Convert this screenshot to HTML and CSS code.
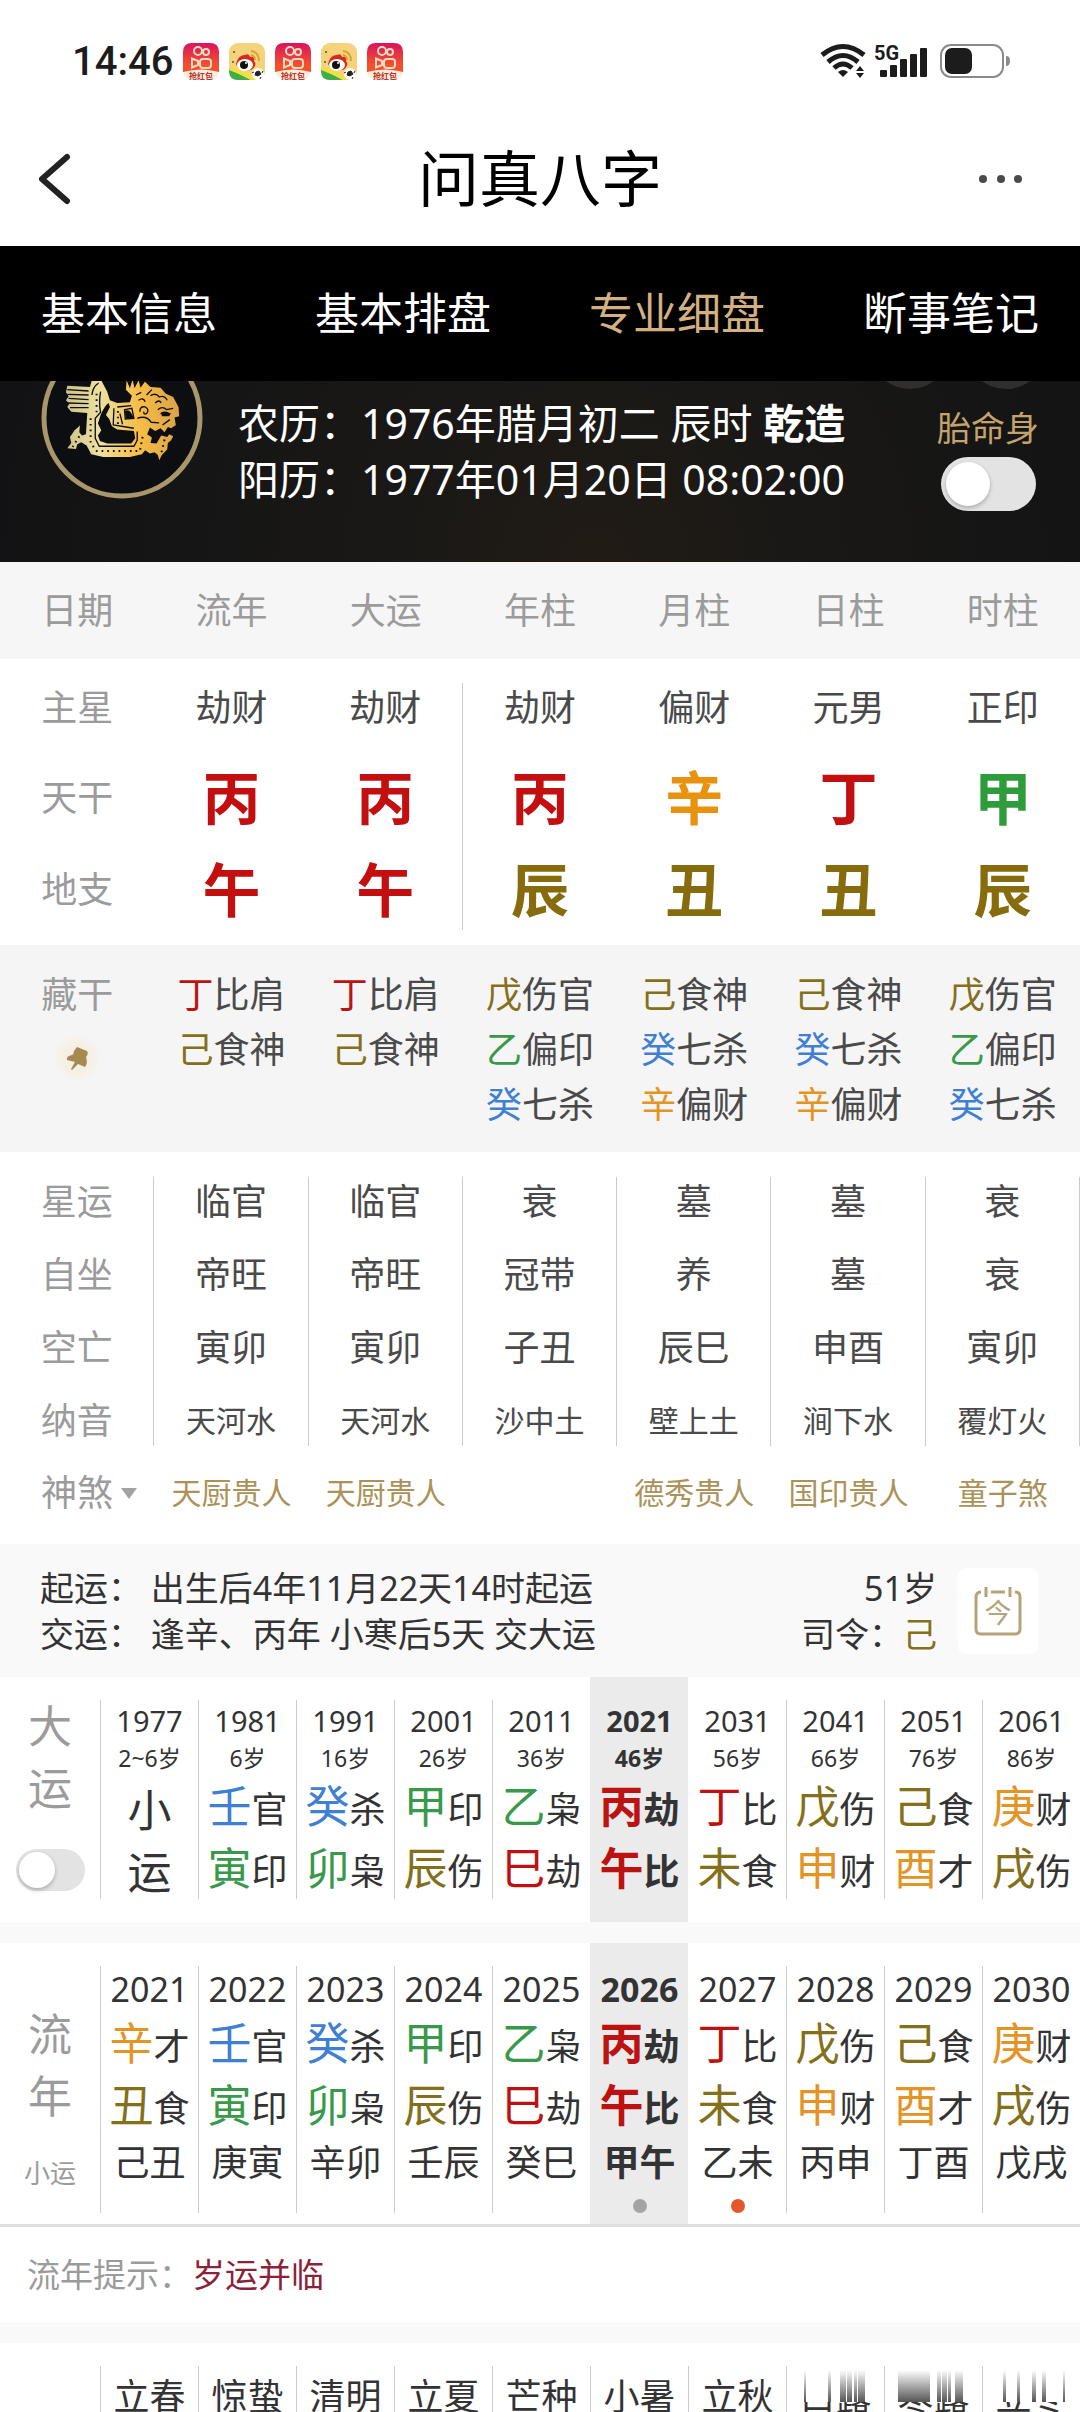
FILE: index.html
```html
<!DOCTYPE html>
<html lang="zh-CN">
  <head>
    <meta charset="UTF-8" />
    <meta name="viewport" content="width=device-width, initial-scale=1.0" />
    <title>问真八字</title>
    <link rel="stylesheet" href="styles.css">
  </head>
  <body>
    <svg class="defs" width="0" height="0" aria-hidden="true">
      <defs>
        <linearGradient id="redbag" x1="0" y1="0" x2="0" y2="1">
          <stop offset="0" stop-color="#d81360" />
          <stop offset="0.75" stop-color="#f4502c" />
        </linearGradient>
        <linearGradient id="gold" x1="0" y1="0" x2="1" y2="0">
          <stop offset="0" stop-color="#cfc389" />
          <stop offset="0.3" stop-color="#eee0a0" />
          <stop offset="0.65" stop-color="#f7bd45" />
          <stop offset="1" stop-color="#d9a24a" />
        </linearGradient>
        <linearGradient id="fade" x1="0" y1="0" x2="0" y2="1">
          <stop offset="0" stop-color="#fff" />
          <stop offset="1" stop-color="#555" />
        </linearGradient>
        <symbol id="app-video" viewBox="0 0 36 37">
          <path d="M0 29V9Q0 0 9 0H27Q36 0 36 9V29Z" fill="url(#redbag)" />
          <path d="M0 29Q18 24 36 29Q34 37 26 37H10Q2 37 0 29Z" fill="#fdeede" />
          <g fill="none" stroke="#fbdcc0" stroke-width="2">
            <circle cx="15" cy="8" r="4" />
            <circle cx="23" cy="9" r="3" />
            <rect x="17" y="16" width="11" height="9" rx="3" />
            <path d="M15 18L9 15.500V24.500L15 22Z" />
          </g>
          <text x="18" y="36" font-size="8" font-weight="700" text-anchor="middle" fill="#b8322a">抢红包</text>
        </symbol>
        <symbol id="app-weibo" viewBox="0 0 36 37">
          <rect width="36" height="37" rx="9" fill="#f4d37c" />
          <path d="M0 26Q12 32 22 37H9Q0 37 0 28Z" fill="#3fae49" />
          <path d="M2 24Q16 27 27 37H22Q12 31 0 27Z" fill="#f2e13c" />
          <path d="M7 21Q9 12 16 12Q20 10 21 14Q27 13 25 18Q29 22 22 27Q10 29 7 21Z" fill="#d9281c" />
          <ellipse cx="16" cy="22" rx="8" ry="6" fill="#fff" />
          <circle cx="15" cy="22" r="4" fill="#111" />
          <circle cx="17" cy="20" r="1" fill="#fff" />
          <path d="M22 8Q30 9 30 18M22 12Q26 13 26 17" fill="none" stroke="#d9a33a" stroke-width="2" />
          <circle cx="5" cy="9" r="1" fill="#6b4a1c" />
          <circle cx="4" cy="19" r="1" fill="#6b4a1c" />
          <circle cx="29" cy="31" r="6" fill="#fff" />
          <path d="M27 29L30 28L32 31L29 33L26 32ZM23 30L25 29M31 36L32 34M34 28L33 30" fill="#222" stroke="#222" />
        </symbol>
      </defs>
    </svg>

    <div class="app">
      <div class="status">
        <span class="clock">14:46</span>
        <div class="notices">
          <svg width="36" height="37"><use href="#app-video" /></svg>
          <svg width="36" height="37"><use href="#app-weibo" /></svg>
          <svg width="36" height="37"><use href="#app-video" /></svg>
          <svg width="36" height="37"><use href="#app-weibo" /></svg>
          <svg width="36" height="37"><use href="#app-video" /></svg>
        </div>
        <svg class="signals" width="192" height="38" viewBox="0 0 192 38">
          <g fill="none" stroke="#1c1c1c" stroke-width="5">
            <path d="M2 12Q23 -5 44 12" />
            <path d="M8 19Q23 6 38 19" />
            <path d="M14 25Q23 17 32 25" />
          </g>
          <path d="M18 29Q23 25 28 29L23 34Z" fill="#1c1c1c" />
          <path d="M36 28L40 23L44 28ZM36 30L40 35L44 30Z" fill="#1c1c1c" />
          <text x="54" y="17" class="net">5G</text>
          <g fill="#1c1c1c">
            <rect x="60" y="27" width="7" height="7" rx="1" />
            <rect x="70" y="22" width="7" height="12" rx="1" />
            <rect x="80" y="16" width="7" height="18" rx="1" />
            <rect x="90" y="11" width="7" height="23" rx="1" />
            <rect x="100" y="5" width="7" height="29" rx="1" />
          </g>
          <rect x="121" y="2" width="62" height="32" rx="10" fill="none" stroke="#8a8a8a" stroke-width="2" />
          <rect x="125" y="5" width="27" height="26" rx="7" fill="#1c1c1c" />
          <path d="M186 13Q190 13 190 18Q190 23 186 23Z" fill="#8a8a8a" />
        </svg>
      </div>

      <header class="titlebar">
        <button class="icon-btn" aria-label="返回">
          <svg width="36" height="52" viewBox="0 0 36 52">
            <path d="M31 4L6 26L31 48" fill="none" stroke="#222" stroke-width="6" stroke-linecap="round" stroke-linejoin="round" />
          </svg>
        </button>
        <h1>问真八字</h1>
        <button class="icon-btn more" aria-label="更多">
          <svg width="46" height="12" viewBox="0 0 46 12" fill="#4a4a4a">
            <circle cx="6" cy="6" r="4" />
            <circle cx="24" cy="6" r="4" />
            <circle cx="41" cy="6" r="4" />
          </svg>
        </button>
      </header>

      <nav class="tabs">
        <a href="#info">基本信息</a>
        <a href="#chart">基本排盘</a>
        <a href="#detail" class="active">专业细盘</a>
        <a href="#notes">断事笔记</a>
      </nav>

      <section class="profile">
        <svg class="emblem" width="162" height="162" viewBox="0 0 162 162">
          <circle cx="81" cy="81" r="78" fill="#0d0e12" stroke="#a8976a" stroke-width="5" />
          <g transform="translate(-11 38) scale(0.333)">
            <path fill="url(#gold)" d="M112 32L180 36L186 14L215 18L232 50L240 76L262 84L300 82L306 62L288 44L290 16L300 40L308 14L314 40L326 16L332 38L345 20L362 36L392 38L408 56L430 66L446 96L448 124L434 128L438 150L424 160L414 156L404 172L392 160L376 168L360 158L352 178L366 188L362 204L380 206L394 182L412 186L418 178L430 184L424 196L414 204L412 224L396 240L388 256L384 240L374 232L360 236L346 226L336 238L300 246H220L184 238L170 212L154 202L142 208L138 222L112 220L124 204L120 186L134 166L150 152L148 172L156 182L168 178L172 114L124 110L112 96L118 86L108 76L116 64L108 52Z" />
            <path fill="#0d0e12" d="M212 120Q224 92 236 84L240 96L228 120L238 132L246 154L262 164L312 168L316 190L304 206H232L210 198L204 182L214 166L204 146Z" />
            <g fill="none" stroke="#0d0e12" stroke-width="4">
              <path d="M112 44L176 48M112 58L176 60M116 70L176 74M112 84L176 86M120 98L176 98" />
              <path d="M186 60Q188 36 206 24M212 50Q206 84 212 112L196 130L196 190L208 214H312L322 196V170" />
              <path d="M252 100L250 150L312 160M262 96L304 92M270 116L278 148M284 104L306 100L312 130L286 132Z" />
              <path d="M330 110Q330 92 346 96Q360 104 350 116Q340 120 342 110M326 76Q340 66 346 80M362 62Q378 52 388 66Q404 60 412 76M376 84Q388 72 394 84M384 104Q398 92 410 104L430 100M392 116H422M322 130Q350 120 364 142L388 144M398 150L420 134M350 60L366 44M318 60L334 52" />
            </g>
            <g fill="none" stroke="#0d0e12" stroke-width="6" stroke-dasharray="5 12">
              <path d="M200 56V120M182 130V204L200 228H330L340 176" />
              <path d="M264 108V150M404 194L394 236M148 184L128 216" />
            </g>
            <path fill="#0d0e12" d="M284 108Q298 100 306 118L312 130H288ZM394 112Q408 106 422 116L418 124H396Z" />
          </g>
        </svg>
        <div class="birth">
          <p>农历：1976年腊月初二 辰时 <b>乾造</b></p>
          <p>阳历：1977年01月20日 08:02:00</p>
        </div>
        <svg class="round-btns" width="180" height="8" viewBox="0 0 180 8" fill="#302f2e">
          <circle cx="42" cy="-32" r="40" />
          <circle cx="138" cy="-32" r="40" />
        </svg>
        <label class="body-switch">
          <span>胎命身</span>
          <input type="checkbox" class="switch switch-lg">
        </label>
      </section>

      <table class="pillars">
        <thead>
          <tr>
            <th>日期</th><th>流年</th><th>大运</th><th>年柱</th><th>月柱</th><th>日柱</th><th>时柱</th>
          </tr>
        </thead>
        <tbody class="stems">
          <tr>
            <th>主星</th><td>劫财</td><td>劫财</td><td>劫财</td><td>偏财</td><td>元男</td><td>正印</td>
          </tr>
          <tr class="big">
            <th>天干</th>
            <td class="fire">丙</td><td class="fire">丙</td><td class="fire">丙</td>
            <td class="metal">辛</td><td class="fire">丁</td><td class="wood">甲</td>
          </tr>
          <tr class="big">
            <th>地支</th>
            <td class="fire">午</td><td class="fire">午</td><td class="earth">辰</td>
            <td class="earth">丑</td><td class="earth">丑</td><td class="earth">辰</td>
          </tr>
        </tbody>
        <tbody class="hidden-stems">
          <tr>
            <th>
              藏干
              <button class="pin" aria-label="固定">
                <svg width="26" height="26" viewBox="0 0 26 26">
                  <path d="M13 2L23 6Q25 8 22 12Q24 18 21 22L14 19L8 25L7 24L11 17L3 15Q2 11 8 10Q10 9 10 6Z" fill="#a78952" />
                </svg>
              </button>
            </th>
            <td><span class="fire">丁</span>比肩<br><span class="earth">己</span>食神</td>
            <td><span class="fire">丁</span>比肩<br><span class="earth">己</span>食神</td>
            <td><span class="earth">戊</span>伤官<br><span class="wood">乙</span>偏印<br><span class="water">癸</span>七杀</td>
            <td><span class="earth">己</span>食神<br><span class="water">癸</span>七杀<br><span class="metal">辛</span>偏财</td>
            <td><span class="earth">己</span>食神<br><span class="water">癸</span>七杀<br><span class="metal">辛</span>偏财</td>
            <td><span class="earth">戊</span>伤官<br><span class="wood">乙</span>偏印<br><span class="water">癸</span>七杀</td>
          </tr>
        </tbody>
        <tbody class="cycles">
          <tr>
            <th>星运</th><td>临官</td><td>临官</td><td>衰</td><td>墓</td><td>墓</td><td>衰</td>
          </tr>
          <tr>
            <th>自坐</th><td>帝旺</td><td>帝旺</td><td>冠带</td><td>养</td><td>墓</td><td>衰</td>
          </tr>
          <tr>
            <th>空亡</th><td>寅卯</td><td>寅卯</td><td>子丑</td><td>辰巳</td><td>申酉</td><td>寅卯</td>
          </tr>
          <tr class="sound">
            <th>纳音</th><td>天河水</td><td>天河水</td><td>沙中土</td><td>壁上土</td><td>涧下水</td><td>覆灯火</td>
          </tr>
        </tbody>
        <tbody class="spirits">
          <tr>
            <th><button class="expand">神煞<i class="caret"></i></button></th>
            <td>天厨贵人</td><td>天厨贵人</td><td></td><td>德秀贵人</td><td>国印贵人</td><td>童子煞</td>
          </tr>
        </tbody>
      </table>

      <section class="luck-info">
        <div class="luck-text">
          <p>起运： 出生后4年11月22天14时起运</p>
          <p>交运： 逢辛、丙年 小寒后5天 交大运</p>
        </div>
        <div class="luck-age">
          <p>51岁</p>
          <p>司令：<span class="earth">己</span></p>
        </div>
        <button class="today" aria-label="今天">
          <svg width="48" height="50" viewBox="0 0 48 50">
            <path d="M7 6Q2 6 2 11V43Q2 48 7 48H41Q46 48 46 43V11Q46 6 41 6M12 1V11M36 1V11M17 6H31" fill="none" stroke="#b5a37c" stroke-width="3" />
            <text x="24" y="37" font-size="27" text-anchor="middle" fill="#b5a37c">今</text>
          </svg>
        </button>
      </section>

      <section class="strip">
        <div class="strip-label">
          <span>大</span>
          <span>运</span>
          <input type="checkbox" class="switch" aria-label="大运">
        </div>
        <button class="col"><span class="cell"><span class="year">1977</span><span class="age">2~6岁</span><span class="gz">小</span><span class="gz">运</span></span></button>
        <button class="col"><span class="cell"><span class="year">1981</span><span class="age">6岁</span><span class="gz"><b class="water">壬</b>官</span><span class="gz"><b class="wood">寅</b>印</span></span></button>
        <button class="col"><span class="cell"><span class="year">1991</span><span class="age">16岁</span><span class="gz"><b class="water">癸</b>杀</span><span class="gz"><b class="wood">卯</b>枭</span></span></button>
        <button class="col"><span class="cell"><span class="year">2001</span><span class="age">26岁</span><span class="gz"><b class="wood">甲</b>印</span><span class="gz"><b class="earth">辰</b>伤</span></span></button>
        <button class="col"><span class="cell"><span class="year">2011</span><span class="age">36岁</span><span class="gz"><b class="wood">乙</b>枭</span><span class="gz"><b class="fire">巳</b>劫</span></span></button>
        <button class="col current"><span class="cell"><span class="year">2021</span><span class="age">46岁</span><span class="gz"><b class="fire">丙</b>劫</span><span class="gz"><b class="fire">午</b>比</span></span></button>
        <button class="col"><span class="cell"><span class="year">2031</span><span class="age">56岁</span><span class="gz"><b class="fire">丁</b>比</span><span class="gz"><b class="earth">未</b>食</span></span></button>
        <button class="col"><span class="cell"><span class="year">2041</span><span class="age">66岁</span><span class="gz"><b class="earth">戊</b>伤</span><span class="gz"><b class="metal">申</b>财</span></span></button>
        <button class="col"><span class="cell"><span class="year">2051</span><span class="age">76岁</span><span class="gz"><b class="earth">己</b>食</span><span class="gz"><b class="metal">酉</b>才</span></span></button>
        <button class="col"><span class="cell"><span class="year">2061</span><span class="age">86岁</span><span class="gz"><b class="metal">庚</b>财</span><span class="gz"><b class="earth">戌</b>伤</span></span></button>
      </section>

      <section class="strip yearly">
        <div class="strip-label">
          <span>流</span>
          <span>年</span>
          <small>小运</small>
        </div>
        <button class="col"><span class="cell"><span class="year">2021</span><span class="gz"><b class="metal">辛</b>才</span><span class="gz"><b class="earth">丑</b>食</span><span class="minor">己丑</span></span></button>
        <button class="col"><span class="cell"><span class="year">2022</span><span class="gz"><b class="water">壬</b>官</span><span class="gz"><b class="wood">寅</b>印</span><span class="minor">庚寅</span></span></button>
        <button class="col"><span class="cell"><span class="year">2023</span><span class="gz"><b class="water">癸</b>杀</span><span class="gz"><b class="wood">卯</b>枭</span><span class="minor">辛卯</span></span></button>
        <button class="col"><span class="cell"><span class="year">2024</span><span class="gz"><b class="wood">甲</b>印</span><span class="gz"><b class="earth">辰</b>伤</span><span class="minor">壬辰</span></span></button>
        <button class="col"><span class="cell"><span class="year">2025</span><span class="gz"><b class="wood">乙</b>枭</span><span class="gz"><b class="fire">巳</b>劫</span><span class="minor">癸巳</span></span></button>
        <button class="col current"><span class="cell"><span class="year">2026</span><span class="gz"><b class="fire">丙</b>劫</span><span class="gz"><b class="fire">午</b>比</span><span class="minor">甲午</span><i class="dot"></i></span></button>
        <button class="col"><span class="cell"><span class="year">2027</span><span class="gz"><b class="fire">丁</b>比</span><span class="gz"><b class="earth">未</b>食</span><span class="minor">乙未</span><i class="dot hot"></i></span></button>
        <button class="col"><span class="cell"><span class="year">2028</span><span class="gz"><b class="earth">戊</b>伤</span><span class="gz"><b class="metal">申</b>财</span><span class="minor">丙申</span></span></button>
        <button class="col"><span class="cell"><span class="year">2029</span><span class="gz"><b class="earth">己</b>食</span><span class="gz"><b class="metal">酉</b>才</span><span class="minor">丁酉</span></span></button>
        <button class="col"><span class="cell"><span class="year">2030</span><span class="gz"><b class="metal">庚</b>财</span><span class="gz"><b class="earth">戌</b>伤</span><span class="minor">戊戌</span></span></button>
      </section>

      <p class="hint">流年提示：<span>岁运并临</span></p>

      <section class="strip terms">
        <div class="strip-label"></div>
        <button class="col"><span class="cell"><span class="minor">立春</span></span></button>
        <button class="col"><span class="cell"><span class="minor">惊蛰</span></span></button>
        <button class="col"><span class="cell"><span class="minor">清明</span></span></button>
        <button class="col"><span class="cell"><span class="minor">立夏</span></span></button>
        <button class="col"><span class="cell"><span class="minor">芒种</span></span></button>
        <button class="col"><span class="cell"><span class="minor">小暑</span></span></button>
        <button class="col"><span class="cell"><span class="minor">立秋</span></span></button>
        <button class="col"><span class="cell"><span class="minor">白露</span></span></button>
        <button class="col"><span class="cell"><span class="minor">寒露</span></span></button>
        <button class="col"><span class="cell"><span class="minor">立冬</span></span></button>
        <svg class="smear" width="294" height="36" viewBox="0 0 294 36">
          <path d="M4 0h92v36h-92zM102 0h92v36h-92zM200 0h92v36h-92z" fill="#fff" />
          <g fill="url(#fade)">
            <path d="M18 4h2v32h-2zM42 4h3v32h-3zM54 4h6v32h-6zM61 4h5v32h-5zM68 4h3v32h-3zM72 4h7v32h-7z" />
            <path d="M112 4h32v32h-32zM151 4h4v32h-4zM156 4h5v32h-5zM162 4h3v32h-3zM169 4h8v32h-8z" />
            <path d="M217 4h3v32h-3zM231 4h3v32h-3zM246 4h4v32h-4zM256 4h4v32h-4zM277 4h2v32h-2z" />
          </g>
        </svg>
      </section>
    </div>
  </body>
</html>
```
FILE: styles.css
```css
* {
  box-sizing: border-box;
}

body {
  margin: 0;
  background: #fff;
  color: #333;
  font-family: "Noto Sans", "Noto Sans CJK SC", sans-serif;
  font-size: 36px;
}

h1,
p {
  margin: 0;
}

button {
  padding: 0;
  border: none;
  background: none;
  color: inherit;
  font: inherit;
}

svg {
  display: block;
}

.defs {
  position: absolute;
}

.app {
  height: 100vh;
  overflow: hidden;
}

/* five elements */
.wood {
  color: #38994a;
}
.fire {
  color: #bd1212;
}
.earth {
  color: #84701a;
}
.metal {
  color: #e39424;
}
.water {
  color: #3f80d2;
}

/* top bars */
.status {
  display: flex;
  align-items: center;
  height: 119px;
  padding: 4px 68px 0 72px;
}

.clock {
  color: #1c1c1c;
  font-family: Roboto, "Noto Sans", sans-serif;
  font-size: 40px;
  font-weight: 500;
}

.notices {
  display: flex;
  gap: 10px;
  margin: 0 auto 0 10px;
}

.net {
  fill: #1c1c1c;
  font-family: Roboto, sans-serif;
  font-size: 20px;
  font-weight: 700;
}

.titlebar {
  display: flex;
  align-items: center;
  height: 127px;
  padding: 0 36px 8px;
}

.titlebar h1 {
  color: #000;
  font-size: 61px;
  font-weight: 400;
  line-height: 80px;
}

.icon-btn {
  display: flex;
  flex: 1;
}

.more svg {
  margin: 0 21px 0 auto;
}

.tabs {
  display: flex;
  justify-content: space-between;
  padding: 0 41px;
  background: #000;
}

.tabs a {
  color: #fff;
  font-size: 44px;
  line-height: 135px;
  text-decoration: none;
}

.tabs a.active {
  color: #d3b082;
}

.profile {
  position: relative;
  display: flex;
  height: 181px;
  padding: 0 41px;
  overflow: hidden;
  background: radial-gradient(circle at 55% 100%, #211b15, #191816 35%, #121214 100%);
  color: #fff;
}

.emblem {
  margin-top: -44px;
}

.birth {
  padding: 14px 0 0 35px;
  font-size: 41px;
  line-height: 56px;
}

.round-btns {
  position: absolute;
  top: 0;
  right: 32px;
}

.body-switch {
  display: flex;
  flex-direction: column;
  align-items: center;
  margin: 24px 0 0 auto;
  color: #c5a46c;
  font-size: 34px;
  line-height: 46px;
}

.switch {
  width: 69px;
  height: 42px;
  margin: 0;
  padding: 3px;
  appearance: none;
  border-radius: 27px;
  background: #e3e3e3;
}

.switch::before {
  display: block;
  width: 36px;
  height: 36px;
  border-radius: 50%;
  background: #fff;
  box-shadow: 0 2px 4px #00000040;
  content: "";
}

.switch:checked {
  background: #c5a46c;
}

.switch:checked::before {
  margin-left: auto;
}

.switch-lg {
  width: 95px;
  height: 54px;
  margin-top: 6px;
  padding: 5px;
}

.switch-lg::before {
  width: 44px;
  height: 44px;
}

/* pillars table */
.pillars,
.pillars thead,
.pillars tbody {
  display: block;
}

.pillars tr {
  display: grid;
  grid-template-columns: repeat(7, 1fr);
}

.pillars th,
.pillars td {
  padding: 0;
  color: #4a4a4a;
  font-weight: 400;
  text-align: center;
  white-space: nowrap;
}

.pillars th {
  color: #9b9b9b;
}

.pillars thead {
  background: #f6f6f6;
  line-height: 97px;
}

.pillars .stems {
  padding: 24px 0 15px;
  line-height: 50px;
}

.stems td:nth-child(3) {
  border-right: 1px solid #ccc;
}

.stems tr:first-child > * {
  padding-bottom: 19px;
}

.stems .big > * {
  padding: 6px 0;
  line-height: 80px;
}

.stems .big:last-child > * {
  padding-bottom: 0;
}

.stems .big td {
  font-size: 58px;
  font-weight: 700;
}

.stems .big td.wood {
  color: #2f9c3c;
}
.stems .big td.fire {
  color: #c30f0f;
}
.stems .big td.earth {
  color: #866c0c;
}
.stems .big td.metal {
  color: #e8920f;
}

.hidden-stems {
  padding: 22px 0 20px;
  background: #f5f5f5;
  line-height: 55px;
}

.pin {
  display: flex;
  align-items: center;
  justify-content: center;
  width: 48px;
  height: 48px;
  margin: 12px auto 0;
  border-radius: 50%;
  background: radial-gradient(#f6efe4 40%, #f5f5f5 70%);
}

.cycles {
  padding-top: 25px;
  line-height: 50px;
}

.cycles th,
.cycles td {
  height: 73px;
  border-right: 1px solid #ccc;
}

.cycles .sound > * {
  height: 50px;
}

.sound td,
.spirits td {
  font-size: 30px;
}

.spirits {
  padding: 22px 0 26px;
  line-height: 50px;
}

.pillars .spirits td {
  color: #ab9259;
}

.expand {
  display: flex;
  align-items: center;
  gap: 8px;
  padding-left: 41px;
}

.caret {
  border: 8px solid transparent;
  border-top: 11px solid #a3a3a3;
  border-bottom: 0;
}

/* luck summary */
.luck-info {
  display: flex;
  align-items: center;
  padding: 21px 42px 20px 40px;
  background: #f9f9f9;
  font-size: 34px;
  line-height: 46px;
}

.luck-age {
  margin: 0 21px 0 auto;
  text-align: right;
}

.today {
  display: flex;
  align-items: center;
  justify-content: center;
  width: 80px;
  height: 86px;
  border-radius: 8px;
  background: #fff;
}

/* scrolling year strips */
.strip {
  position: relative;
  display: grid;
  grid-template-columns: 100px repeat(10, 1fr);
  border-bottom: 21px solid #f9f9f9;
}

.strip-label {
  display: flex;
  flex-direction: column;
  align-items: center;
  padding-top: 18px;
  color: #9b9b9b;
  font-size: 44px;
  line-height: 62px;
}

.strip-label .switch {
  margin-top: 30px;
}

.col {
  padding: 23px 0;
}

.cell {
  display: flex;
  flex-direction: column;
  align-items: center;
  height: 100%;
  border-left: 1px solid #ccc;
  white-space: nowrap;
}

.current {
  background: #ebebeb;
  font-weight: 700;
}

.current .cell,
.current + .col .cell {
  border-color: transparent;
}

.year {
  font-size: 29px;
  line-height: 42px;
}

.age {
  font-size: 23px;
  line-height: 33px;
}

.gz {
  padding-top: 8px;
  font-size: 36px;
  line-height: 54px;
}

.gz b {
  font-size: 44px;
  font-weight: inherit;
  line-height: 1;
}

.col:nth-child(2) .age ~ .gz {
  font-size: 44px;
}

.minor {
  line-height: 54px;
}

.yearly {
  border-bottom: 3px solid #dedede;
}

.yearly .strip-label {
  padding-top: 60px;
}

.yearly .strip-label small {
  margin-top: 15px;
  font-size: 26px;
}

.yearly .col {
  padding-bottom: 11px;
}

.yearly .cell {
  min-height: 247px;
}

.yearly .year {
  font-size: 34px;
  line-height: 46px;
}

.dot {
  width: 14px;
  height: 14px;
  margin-top: 9px;
  border-radius: 50%;
  background: #a3a3a3;
}

.dot.hot {
  background: #e2582a;
}

.hint {
  padding-left: 27px;
  border-bottom: 21px solid #f9f9f9;
  color: #9b9b9b;
  font-size: 33px;
  line-height: 95px;
}

.hint span {
  color: #8c2238;
}

.terms .minor {
  line-height: 62px;
}

.smear {
  position: absolute;
  top: 23px;
  right: 0;
}
```
